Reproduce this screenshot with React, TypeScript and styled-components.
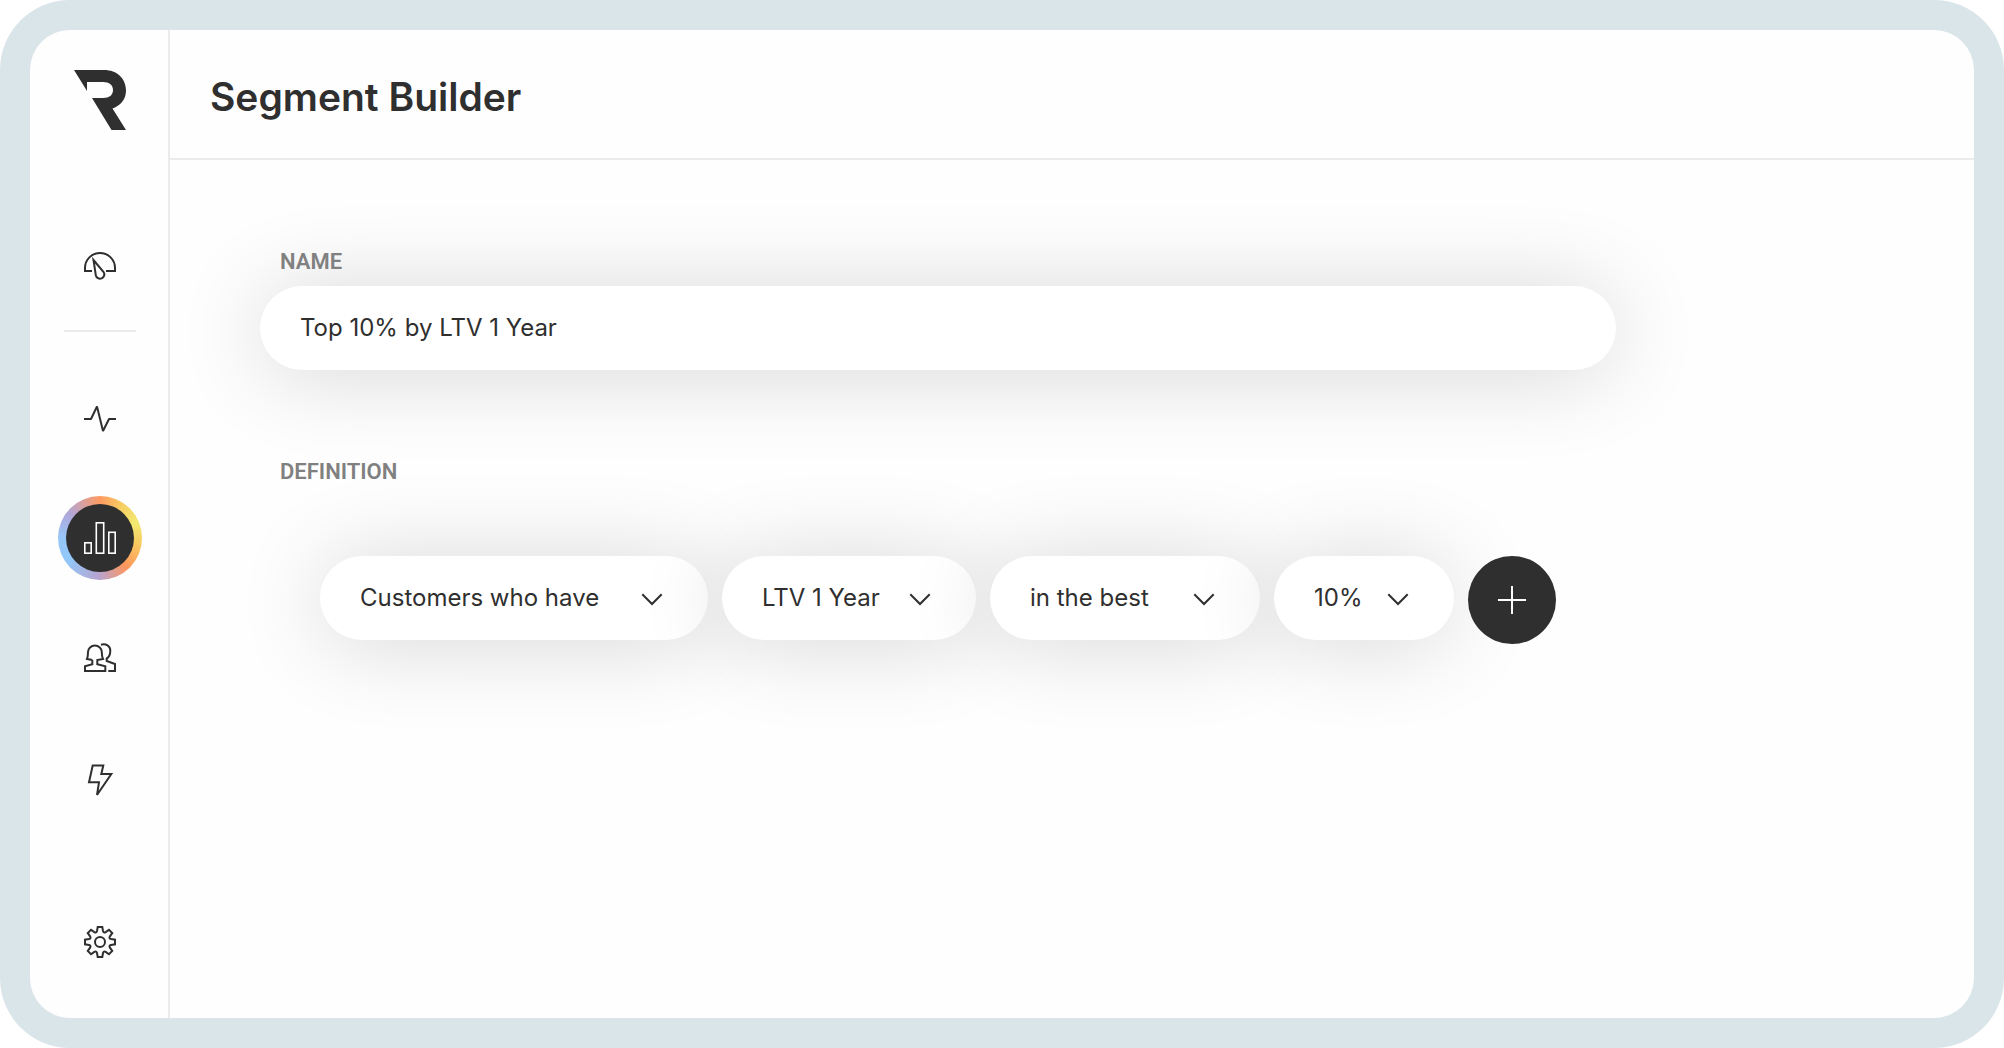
import React from "react";
import styled, { createGlobalStyle } from "styled-components";

const ink = "#2f2f2f";
const line = "#ebebeb";
const softShadow = "0 4px 90px rgba(0, 0, 0, 0.16)";

const GlobalStyle = createGlobalStyle`
  *, *::before, *::after { box-sizing: border-box; }
  body {
    margin: 0;
    background: #fff;
    color: ${ink};
    font-family: Inter, "Liberation Sans", sans-serif;
  }
  button, input, select { font: inherit; color: inherit; }
`;

const Frame = styled.div`
  display: flex;
  min-height: 100vh;
  padding: 30px;
  background: #dae5ea;
  border-radius: 70px;
`;

const Panel = styled.div`
  flex: 1;
  display: flex;
  min-width: 0;
  background: #fefefe;
  border-radius: 40px;
  overflow: hidden;
`;

const Sidebar = styled.aside`
  display: flex;
  flex-direction: column;
  align-items: center;
  width: 140px;
  padding: 40px 0 34px 2px;
  border-right: 2px solid ${line};
`;

const LogoLink = styled.a`
  display: block;
  height: 60px;
  color: ${ink};
`;

const Nav = styled.nav`
  flex: 1;
  display: flex;
  flex-direction: column;
  align-items: center;
  margin-top: 94px;
`;

const NavGroup = styled.div`
  display: flex;
  flex-direction: column;
  gap: 36px;
`;

const NavDivider = styled.hr`
  width: 72px;
  height: 2px;
  margin: 22px 0 44px;
  border: 0;
  background: ${line};
`;

const NavFooter = styled.div`
  margin-top: auto;
`;

const NavButton = styled.button<{ $active?: boolean }>`
  display: flex;
  align-items: center;
  justify-content: center;
  width: 84px;
  height: 84px;
  padding: 0;
  border: 8px solid transparent;
  border-radius: 50%;
  cursor: pointer;
  color: ${(p) => (p.$active ? "#fff" : ink)};
  background: ${(p) =>
    p.$active
      ? `linear-gradient(${ink}, ${ink}) padding-box,
         conic-gradient(#ff9a62, #f5cf62 35deg, #f2ea70 68deg, #f8c860 100deg, #ff965c 138deg,
           #b6a4d2 182deg, #92c8fa 235deg, #96c6f8 270deg, #b0a6da 308deg, #ff9a62 360deg) border-box`
      : "transparent"};
`;

const Main = styled.main`
  flex: 1;
  min-width: 0;
`;

const Header = styled.header`
  display: flex;
  align-items: center;
  height: 130px;
  padding: 6px 40px 0;
  border-bottom: 2px solid ${line};
`;

const Title = styled.h1`
  margin: 0;
  font-size: 39px;
  line-height: 48px;
  font-weight: 600;
`;

const Form = styled.form`
  max-width: 1536px;
  padding: 88px 90px 90px;
`;

const labelText = `
  display: block;
  padding: 0 20px;
  font-family: Roboto, "Liberation Sans", sans-serif;
  font-size: 22px;
  line-height: 28px;
  font-weight: 600;
  color: #808080;
`;

const FieldLabel = styled.label`
  ${labelText}
`;

const NameInput = styled.input`
  display: block;
  width: 100%;
  height: 84px;
  margin-top: 10px;
  padding: 0 40px 2px;
  border: 0;
  border-radius: 42px;
  outline: none;
  background: #fff;
  box-shadow: ${softShadow};
  font-size: 24px;
`;

const Definition = styled.fieldset`
  min-width: 0;
  margin: 88px 0 0;
  padding: 0;
  border: 0;
`;

const Legend = styled.legend`
  ${labelText}
`;

const RuleRow = styled.div`
  display: flex;
  flex-wrap: wrap;
  gap: 14px;
  padding: 70px 60px 0;
`;

const Pill = styled.div<{ $width: number }>`
  display: grid;
  align-items: center;
  width: ${(p) => p.$width}px;
  height: 84px;
  border-radius: 42px;
  background: #fff;
  box-shadow: ${softShadow};

  > * {
    grid-area: 1 / 1;
  }
`;

const PillSelect = styled.select`
  appearance: none;
  width: 100%;
  height: 84px;
  padding: 0 80px 2px 40px;
  border: 0;
  border-radius: 42px;
  outline: none;
  background: transparent;
  font-size: 24px;
  cursor: pointer;
`;

const Chevron = styled.svg`
  justify-self: end;
  margin-right: 44px;
  pointer-events: none;
`;

const AddButton = styled.button`
  display: flex;
  align-items: center;
  justify-content: center;
  width: 88px;
  height: 88px;
  padding: 0;
  border: 0;
  border-radius: 50%;
  background: ${ink};
  color: #fff;
  cursor: pointer;
`;

const IconSvg = styled.svg`
  flex-shrink: 0;
`;

const Icon = ({ children, stroke = 2 }: { children: React.ReactNode; stroke?: number }) => (
  <IconSvg
    width="40"
    height="40"
    viewBox="-20 -20 40 40"
    fill="none"
    stroke="currentColor"
    strokeWidth={stroke}
    aria-hidden="true"
  >
    {children}
  </IconSvg>
);

/* Eight teeth, each a flat tip with flared sides joined by a shallow valley. */
const gearPath = (() => {
  const parts: string[] = [];
  const at = (deg: number, along: number, side: number) => {
    const a = (deg * Math.PI) / 180;
    const x = along * Math.cos(a) - side * Math.sin(a);
    const y = along * Math.sin(a) + side * Math.cos(a);
    return `${x.toFixed(2)} ${y.toFixed(2)}`;
  };
  for (let i = 0; i < 8; i++) {
    const deg = i * 45 - 90;
    parts.push(`${i ? "L" : "M"}${at(deg, 11, -3)}`);
    parts.push(`L${at(deg, 15, -2.3)}`);
    parts.push(`L${at(deg, 15, 2.3)}`);
    parts.push(`L${at(deg, 11, 3)}`);
    parts.push(`Q${at(deg + 22.5, 9.4, 0)} ${at(deg + 45, 11, -3)}`);
  }
  return parts.join("") + "Z";
})();

const rules = [
  { label: "Audience", width: 388, options: ["Customers who have", "Customers who do not have"] },
  { label: "Metric", width: 254, options: ["LTV 1 Year", "LTV 2 Years"] },
  { label: "Ranking", width: 270, options: ["in the best", "in the worst"] },
  { label: "Share", width: 180, options: ["10%", "20%", "50%"] },
];

export default function App() {
  return (
    <>
      <GlobalStyle />
      <Frame>
        <Panel>
          <Sidebar>
            <LogoLink href="#" aria-label="Home">
              <svg width="52" height="60" viewBox="0 0 52 60" fill="currentColor" aria-hidden="true">
                <path d="M0 0H30C43 0 52 8.5 52 20.5C52 29 47 35.5 38.5 38.5L52 60H37.5L18 28H29C35.5 28 39 25 39 20C39 15 35.5 12 29 12H13V21Z" />
              </svg>
            </LogoLink>
            <Nav aria-label="Main">
              <NavButton type="button" aria-label="Dashboard">
                <Icon>
                  <path d="M-8 5H-15V2A15 15 0 0 1 15 2V5H6" />
                  <path d="M-6.5 -6L3.6 6A4.3 4.3 0 1 1 -4.2 9.2Z" />
                </Icon>
              </NavButton>
              <NavDivider />
              <NavGroup>
                <NavButton type="button" aria-label="Activity">
                  <Icon>
                    <path d="M-16 1H-9L-3 -11.5L3 13L9 1H16" strokeLinejoin="bevel" />
                  </Icon>
                </NavButton>
                <NavButton type="button" aria-label="Segments" aria-current="page" $active>
                  <Icon stroke={1.6}>
                    <rect x="-15.2" y="4.8" width="6.4" height="10.4" />
                    <rect x="-3.7" y="-15.2" width="7.4" height="30.4" />
                    <rect x="8.8" y="-5.7" width="6.4" height="20.9" />
                  </Icon>
                </NavButton>
                <NavButton type="button" aria-label="Customers">
                  <Icon>
                    <path d="M-7.7 2V6.3L-15 8.3V13H5.3V8.3L-2.7 6.3V2L3 1C2 -1 1.8 -3 1.8 -6A6.9 6.5 0 0 0 -12 -6C-12 -3 -12 -1 -13 1L-7.7 2" />
                    <path d="M1 -13.3C6 -14.8 10.3 -12 10.3 -7.5C10.3 -4 9.5 -1 6.7 .5V3L15 6V13H8.3" />
                  </Icon>
                </NavButton>
                <NavButton type="button" aria-label="Automations">
                  <Icon>
                    <path d="M-7.3 -12.5H3.3L1.3 -4H11.3L-3 17L-1 4.3H-11Z" />
                  </Icon>
                </NavButton>
              </NavGroup>
              <NavFooter>
                <NavButton type="button" aria-label="Settings">
                  <Icon>
                    <path d={gearPath} />
                    <circle r="5" />
                  </Icon>
                </NavButton>
              </NavFooter>
            </Nav>
          </Sidebar>
          <Main>
            <Header>
              <Title>Segment Builder</Title>
            </Header>
            <Form onSubmit={(e) => e.preventDefault()}>
              <FieldLabel htmlFor="segment-name">NAME</FieldLabel>
              <NameInput id="segment-name" type="text" defaultValue="Top 10% by LTV 1 Year" />
              <Definition>
                <Legend>DEFINITION</Legend>
                <RuleRow>
                  {rules.map((rule) => (
                    <Pill key={rule.label} $width={rule.width}>
                      <PillSelect aria-label={rule.label} defaultValue={rule.options[0]}>
                        {rule.options.map((option) => (
                          <option key={option}>{option}</option>
                        ))}
                      </PillSelect>
                      <Chevron width="24" height="16" viewBox="0 0 24 16" fill="none" stroke={ink} strokeWidth="2" aria-hidden="true">
                        <path d="M2.3 4.3L12 14L21.7 4.3" />
                      </Chevron>
                    </Pill>
                  ))}
                  <AddButton type="button" aria-label="Add condition">
                    <Icon>
                      <path d="M-14 0H14M0 -14V14" />
                    </Icon>
                  </AddButton>
                </RuleRow>
              </Definition>
            </Form>
          </Main>
        </Panel>
      </Frame>
    </>
  );
}
